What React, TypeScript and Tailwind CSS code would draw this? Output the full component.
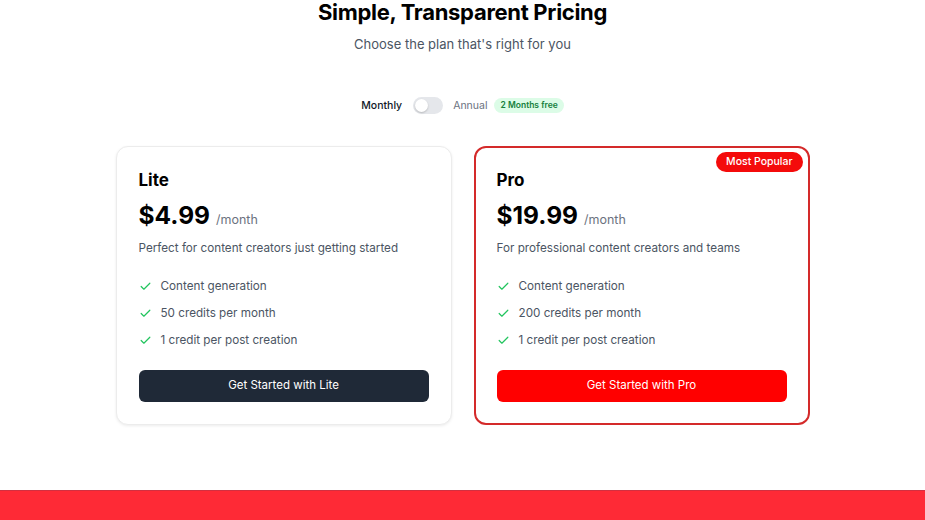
import React from "react";

const Check = () => (
  <svg width="13" height="13" viewBox="0 0 24 24" fill="none" stroke="#22c55e" strokeWidth="2.2" strokeLinecap="round" strokeLinejoin="round">
    <path d="M20 6 9 17l-5-5" />
  </svg>
);

type Plan = {
  name: string;
  price: string;
  desc: string;
  features: string[];
  cta: string;
  pro?: boolean;
};

const plans: Plan[] = [
  {
    name: "Lite",
    price: "$4.99",
    desc: "Perfect for content creators just getting started",
    features: ["Content generation", "50 credits per month", "1 credit per post creation"],
    cta: "Get Started with Lite",
  },
  {
    name: "Pro",
    price: "$19.99",
    desc: "For professional content creators and teams",
    features: ["Content generation", "200 credits per month", "1 credit per post creation"],
    cta: "Get Started with Pro",
    pro: true,
  },
];

function Card({ p }: { p: Plan }) {
  return (
    <div
      className={
        p.pro
          ? "relative rounded-xl border-2 border-[#d42a2a] bg-white px-[21px] pt-[21px] pb-[21px]"
          : "relative rounded-xl border border-[#ececec] bg-white px-[22px] pt-[22px] pb-[22px] shadow-[0_1px_3px_rgba(0,0,0,0.08)]"
      }
    >
      {p.pro && (
        <div className="absolute right-[5px] top-[4px] rounded-full bg-[#f40b0b] px-[10px] py-[3px] text-[10.5px] font-medium leading-[14px] text-white">
          Most Popular
        </div>
      )}
      <div className="text-[17px] font-bold leading-[22px] text-black">{p.name}</div>
      <div className="mt-[8px] flex items-baseline gap-[6px]">
        <span className="text-[24.5px] font-bold leading-[32px] text-black">{p.price}</span>
        <span className="text-[12.5px] text-[#6b7280]">/month</span>
      </div>
      <div className="mt-[8px] text-[11.7px] leading-[18px] text-[#4b5563]">{p.desc}</div>
      <ul className="mt-[20px] flex flex-col gap-[9px]">
        {p.features.map((f) => (
          <li key={f} className="flex items-center gap-[9px] text-[11.7px] leading-[18px] text-[#4b5563]">
            <Check />
            <span>{f}</span>
          </li>
        ))}
      </ul>
      <button
        className={
          (p.pro ? "bg-[#ff0000]" : "bg-[#1f2937]") +
          " mt-[21px] flex h-[32px] w-full items-center justify-center rounded-md text-[11.5px] text-white"
        }
      >
        {p.cta}
      </button>
    </div>
  );
}

export default function App() {
  return (
    <div className="flex min-h-[520px] flex-col bg-white" style={{ fontFamily: "Inter, 'Noto Sans', sans-serif" }}>
      <div className="flex-1">
        <h1 className="text-center text-[22px] font-bold leading-[25px] tracking-[-0.3px] text-black">Simple, Transparent Pricing</h1>
        <p className="mt-[10px] text-center text-[13px] leading-[18px] text-[#4b5563]">Choose the plan that's right for you</p>
        <div className="mt-[44px] flex items-center justify-center">
          <span className="text-[10.5px] font-medium text-[#111827]">Monthly</span>
          <div className="ml-[11px] flex h-[17px] w-[30px] items-center rounded-full bg-[#e5e7eb] px-[2px]">
            <div className="h-[13px] w-[13px] rounded-full bg-white shadow-[0_1px_2px_rgba(0,0,0,0.2)]" />
          </div>
          <span className="ml-[10px] text-[10.5px] text-[#6b7280]">Annual</span>
          <span className="ml-[7px] rounded-full bg-[#dcfce7] px-[6px] py-[1px] text-[8.5px] font-semibold text-[#15803d]">2 Months free</span>
        </div>
        <div className="mx-auto mt-[32px] grid w-[694px] grid-cols-2 gap-[22px]">
          {plans.map((p) => (
            <Card key={p.name} p={p} />
          ))}
        </div>
      </div>
      <div className="h-[30px] border-t border-[#d23040] bg-[#fe2a36]" />
    </div>
  );
}
